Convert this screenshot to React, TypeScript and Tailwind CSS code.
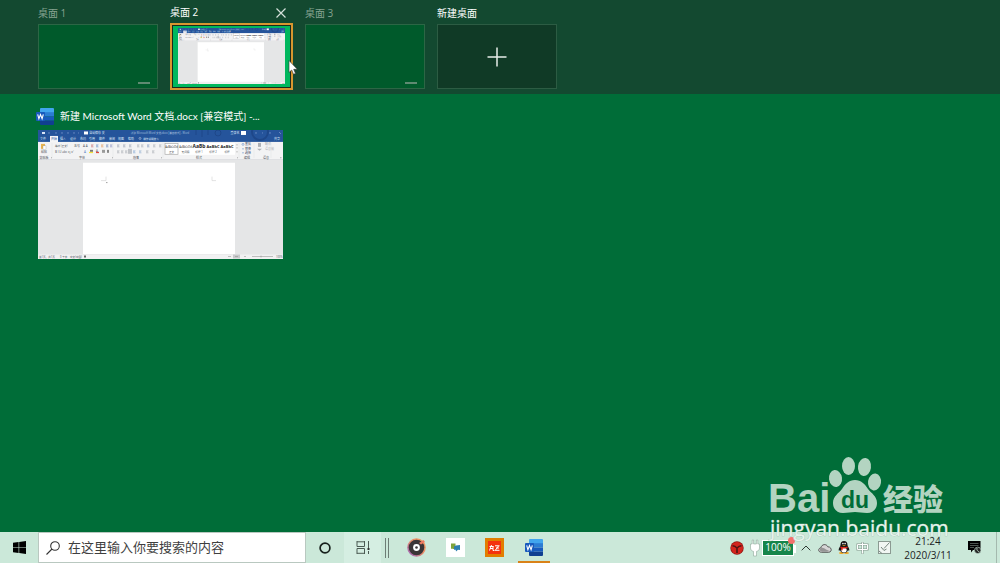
import React, { useState } from "react";
import { clsx } from "clsx";

const tabs = [
  { x: 5, title: "文件" },
  { x: 25, title: "插入" },
  { x: 35, title: "设计" },
  { x: 45, title: "布局" },
  { x: 54, title: "引用" },
  { x: 64, title: "邮件" },
  { x: 74, title: "审阅" },
  { x: 83, title: "视图" },
  { x: 93, title: "帮助" },
];

const groups = [
  { x: 6, title: "剪贴板" },
  { x: 44, title: "字体" },
  { x: 98, title: "段落" },
  { x: 161, title: "样式" },
  { x: 209, title: "编辑" },
  { x: 228, title: "语音" },
];

const tools = [
  { x: 53, y: 14, color: "#c55a5a" },
  { x: 58, y: 14, color: "#4a7cc0" },
  { x: 63, y: 14, color: "#e08a3c" },
  { x: 68, y: 14, color: "#4a6fae" },
  { x: 72, y: 14, color: "#7b83b8" },
  { x: 79, y: 14, color: "#8a93a5" },
  { x: 85, y: 14, color: "#8a93a5" },
  { x: 91, y: 14, color: "#8a93a5" },
  { x: 99, y: 14, color: "#9aa0ab" },
  { x: 103, y: 14, color: "#9aa0ab" },
  { x: 109, y: 14, color: "#6d87b5" },
  { x: 115, y: 14, color: "#9aa0ab" },
  { x: 121, y: 14, color: "#9aa0ab" },
  { x: 79, y: 20, color: "#9aa0ab" },
  { x: 83, y: 20, color: "#9aa0ab" },
  { x: 87, y: 20, color: "#9aa0ab" },
  { x: 95, y: 20, color: "#6f9bd0" },
  { x: 101, y: 20, color: "#7fa3cc" },
  { x: 108, y: 20, color: "#9aa0ab" },
  { x: 114, y: 20, color: "#9aa0ab" },
];

const styles = [
  { x: 133.5, text: "AaBbCcDd", size: 2.6, weight: 400, name: "正文" },
  { x: 147.5, text: "AaBbCcDd", size: 2.6, weight: 400, name: "无间隔" },
  { x: 161, text: "AaBb", size: 5, weight: 700, name: "标题 1" },
  { x: 175, text: "AaBbC", size: 4, weight: 700, name: "标题 2" },
  { x: 189, text: "AaBbC", size: 4, weight: 700, name: "标题" },
];

// Live preview of the Word window, used by the desktop strip and by the window card
const WordPreview = () => (
  <svg
    viewBox="0 0 245 130"
    preserveAspectRatio="none"
    className="block h-full w-full"
    fontSize="3"
    fill="#4b4f57"
  >
    <rect width="245" height="130" fill="#e5e6e7" />
    <rect width="245" height="13" fill="#25549b" />
    <g fill="none" stroke="#1e4789">
      <circle cx="222" cy="2" r="8" strokeWidth="2" />
      <circle cx="180" cy="3" r="3" />
      <path d="M158 0v5M164 0v7M170 0v5" />
    </g>
    <g fill="#dbe6f7" textAnchor="middle">
      <rect x="4" y="2" width="3" height="2" />
      <path
        d="M10 3h2M17 3h2M23 3h2M29 3h2M35 3h2M40 3h1M217 3h2M224 3h1M231 3h2M241 2l2 2"
        stroke="#8eaad6"
        strokeWidth="0.6"
      />
      <rect x="46" y="1.5" width="4" height="3" fill="#fff" />
      <text x="59" y="4">自动保存 关</text>
      <text x="122" y="4" fontSize="2.6" opacity=".7">
        新建 Microsoft Word 文档.docx [兼容模式] - Word
      </text>
      <text x="197" y="4">登录名</text>
      <rect x="203" y="1" width="5" height="4" fill="#fff" />
      {tabs.map((tab) => (
        <text key={tab.x} x={tab.x} y="10">
          {tab.title}
        </text>
      ))}
      <circle cx="102" cy="8.5" r="1" fill="none" stroke="#fff" strokeWidth=".4" />
      <text x="113" y="10" fontSize="2.6">
        操作说明搜索
      </text>
      <text x="239" y="10">共享</text>
    </g>
    <rect x="12" y="6" width="8" height="7" fill="#f5f6f7" />
    <text x="16" y="10" textAnchor="middle" fill="#25549b">
      开始
    </text>
    <rect y="12" width="245" height="18" fill="#f3f3f4" />
    <rect y="29.5" width="245" height=".5" fill="#cfd1d4" />
    <rect x="3" y="14" width="4" height="5" fill="#e9b44f" />
    <rect x="5" y="16" width="3" height="4" fill="#fff" stroke="#888" strokeWidth=".3" />
    <text x="3" y="23">粘贴</text>
    <text x="17" y="17" fontSize="2.6">
      等线 (正文)
    </text>
    <text x="36" y="17">五号</text>
    <text x="45" y="17">A A</text>
    <text x="17" y="23">B I U abc x₂ x²</text>
    <text x="46" y="23" fill="#4a7cc0">
      A
    </text>
    <rect x="52" y="20" width="3" height="2" fill="#777" />
    <rect x="51" y="22" width="4" height="1.3" fill="#f3e13b" />
    <text x="58" y="22">A</text>
    <rect x="58" y="22" width="3" height="1.3" fill="#e2483d" />
    <rect x="64" y="20" width="3" height="3" fill="#9a9a9a" />
    <rect x="69" y="20" width="2" height="3" fill="#888" />
    <rect x="90" y="19" width="4" height="5" fill="#bfc2c7" />
    {tools.map((tool) => (
      <path
        key={`${tool.x}-${tool.y}`}
        d={`M${tool.x} ${tool.y + 1}h2.5m-2.5 1h2m-2 1h2.5`}
        stroke={tool.color}
        strokeWidth=".5"
      />
    ))}
    <rect x="127" y="13" width="70" height="12" fill="#fff" />
    <rect x="127" y="13.5" width="13" height="11" fill="#fff" stroke="#aaa" strokeWidth=".7" />
    {styles.map((style) => (
      <g key={style.x} textAnchor="middle">
        <text x={style.x} y="18" fontSize={style.size} fontWeight={style.weight} fill="#222">
          {style.text}
        </text>
        <text x={style.x} y="23" fontSize="2.6">
          {style.name}
        </text>
      </g>
    ))}
    <path d="M198 15h2M198 18h2M198 22h2" stroke="#999" strokeWidth=".5" />
    <g fill="#35445f">
      <circle cx="205" cy="14.5" r="1" fill="none" stroke="#4a7cc0" strokeWidth=".5" />
      <text x="207" y="15.5">查找</text>
      <text x="207" y="20">替换</text>
      <text x="207" y="24.5">选择</text>
      <path d="M204 19h2M204 23h2" stroke="#4a7cc0" strokeWidth=".5" />
    </g>
    <g fill="#aeb1b6">
      <rect x="220" y="13" width="3" height="4" />
      <path d="M219 19h5l-2.5 2z" />
      <text x="227" y="15.5">翻译</text>
      <text x="227" y="20">语音输</text>
    </g>
    {groups.map((group) => (
      <text key={group.x} x={group.x} y="29" textAnchor="middle">
        {group.title}
      </text>
    ))}
    <path
      d="M14 13v15M75 13v15M125 13v15M201 13v15M216 13v15M233 13v15"
      stroke="#dcdde0"
      strokeWidth=".4"
    />
    <path d="M13 28h1M74 28h1M123 28h1M199 28h1M242 28h1.5" stroke="#777" strokeWidth=".6" />
    <rect x="45" y="33" width="152" height="92" fill="#fff" />
    <path d="M63 51h5v-4M174 47v4h4" fill="none" stroke="#c9c9c9" strokeWidth=".5" />
    <path d="M68 53h1.5" stroke="#777" strokeWidth=".7" />
    <rect y="125.5" width="245" height="4.5" fill="#f1f1f2" />
    <g fontSize="2.6">
      <text x="1" y="129">
        第1页，共1页
      </text>
      <text x="22" y="129">0 个字</text>
      <text x="32" y="129">中文(中国)</text>
      <text x="238" y="129">100%</text>
    </g>
    <rect x="46" y="126.5" width="2" height="2" fill="#666" />
    <rect x="195" y="125.5" width="7" height="4" fill="#c8c9cb" />
    <path
      d="M190 127.5h3M197 127.5h3M206 127.5h2M214 127.5h21M223 126.5v2"
      stroke="#8a8a8a"
      strokeWidth=".5"
    />
  </svg>
);

const WordIcon = () => (
  <svg viewBox="0 0 18 17" className="h-[17px] w-[18px] shrink-0">
    <path d="M5 0h12a1 1 0 0 1 1 1v4H4V1a1 1 0 0 1 1-1z" fill="#41a5ee" />
    <path d="M4 4.200h14v4.300H4z" fill="#2b7cd3" />
    <path d="M4 8.500h14v4.200H4z" fill="#185abd" />
    <path d="M4 12.700h14V16a1 1 0 0 1-1 1H5a1 1 0 0 1-1-1z" fill="#103f91" />
    <rect y="4" width="9" height="9" rx="1" fill="#185abd" />
    <path
      d="M1.700 6.300l1.200 4.500 1.600-4.300 1.600 4.300 1.200-4.500"
      fill="none"
      stroke="#fff"
      strokeWidth="1.1"
    />
  </svg>
);

const desktops = [
  { id: 1, title: "桌面 1" },
  { id: 2, title: "桌面 2" },
  { id: 3, title: "桌面 3" },
];

const DesktopStrip = () => {
  const [active, setActive] = useState(2);
  return (
    <header className="flex h-[94px] gap-3 bg-[#134930] px-[38px] text-[10px]">
      {desktops.map((desktop) => {
        const selected = active === desktop.id;
        return (
          <div
            key={desktop.id}
            className={clsx("relative", selected ? "w-[123px]" : "w-[120px]")}
          >
            <div
              className={clsx(
                "flex items-center justify-between pt-0.5",
                selected ? "h-[23px] text-white" : "h-6 text-[#86a391]"
              )}
            >
              <span>{desktop.title}</span>
              {selected && (
                <button aria-label="关闭" className="mr-[7px] text-[#d5e0da]">
                  <svg viewBox="0 0 10 10" className="h-2.5 w-2.5">
                    <path d="M.5.5l9 9M9.500.5l-9 9" stroke="currentColor" strokeWidth="1.2" />
                  </svg>
                </button>
              )}
            </div>
            <button
              aria-label={desktop.title}
              onClick={() => setActive(desktop.id)}
              className={clsx(
                "block w-full",
                selected
                  ? "h-[67px] border-2 border-[#d8962f] bg-[#1c2a1c] p-px"
                  : "h-[65px] border border-[#2c6645] bg-[#005a2b]"
              )}
            >
              {selected ? (
                <span className="block h-full bg-[#00b75e] px-[5px] pt-0.5 pb-[3px]">
                  <WordPreview />
                </span>
              ) : (
                <span className="flex h-full items-end justify-end pr-[7px] pb-1">
                  <span className="h-0.5 w-3 bg-[#5f8a72]" />
                </span>
              )}
            </button>
            {selected && (
              <svg
                viewBox="0 0 10 15"
                className="absolute top-[60px] -right-[5px] h-[15px] w-2.5"
              >
                <path
                  d="M1 .5v12l2.700-2.500 1.800 4.300 2-.9-1.800-4.100h3.600z"
                  fill="#fff"
                  stroke="#333"
                  strokeWidth=".6"
                />
              </svg>
            )}
          </div>
        );
      })}
      <div className="w-[120px] text-white">
        <div className="flex h-6 items-center pt-0.5">新建桌面</div>
        <button
          aria-label="新建桌面"
          className="flex h-[65px] w-full items-center justify-center border border-[#2c5c43] bg-[#103a26]"
        >
          <svg viewBox="0 0 20 20" className="h-5 w-5">
            <path d="M10 .5v19M.5 10h19" stroke="#e6ede9" strokeWidth="1.5" />
          </svg>
        </button>
      </div>
    </header>
  );
};

const WindowCard = () => (
  <article className="w-[247px]">
    <div className="flex h-6 items-center gap-1.5 text-[10px] text-white">
      <div className="-ml-0.5 flex">
        <WordIcon />
      </div>
      <h2 className="whitespace-nowrap font-['Lato','Noto_Sans_CJK_SC',sans-serif]">
        新建 Microsoft Word 文档.docx [兼容模式] -...
      </h2>
    </div>
    <div className="mt-0.5 h-[129px] w-[245px]">
      <WordPreview />
    </div>
  </article>
);

const Watermark = () => (
  <svg
    viewBox="0 0 184 90"
    className="pointer-events-none absolute right-[52px] bottom-[18px] h-[90px] w-[184px]"
    fill="#b3d4c1"
  >
    <text x="4" y="57" fontSize="40" fontWeight="700" fontFamily="Liberation Sans, sans-serif">
      Bai
    </text>
    <ellipse cx="71.5" cy="23.5" rx="6.5" ry="8.5" transform="rotate(-8 71.5 23.5)" />
    <ellipse cx="84.5" cy="11" rx="6.5" ry="9" />
    <ellipse cx="100.5" cy="12" rx="6.5" ry="9" transform="rotate(8 100.5 12)" />
    <ellipse cx="110.5" cy="27" rx="6.5" ry="8.5" transform="rotate(8 110.5 27)" />
    <path d="M91 25c6 0 10 4 13 9 3 4 9 7 9 14 0 6-4 10-10 10-5 0-8-1-12-1s-7 1-12 1c-6 0-10-4-10-10 0-7 6-10 9-14 3-5 7-9 13-9z" />
    <text
      x="77"
      y="53"
      fontSize="23"
      fontWeight="700"
      fontFamily="Liberation Sans, sans-serif"
      fill="#006d38"
    >
      du
    </text>
    <text
      x="119"
      y="55"
      fontSize="30"
      fontWeight="900"
      fontFamily="Noto Sans CJK SC, sans-serif"
    >
      经验
    </text>
    <text
      x="6"
      y="81"
      fontSize="21"
      fontWeight="500"
      fill="#e6f3ec"
      stroke="#9dbfae"
      strokeWidth=".6"
      paintOrder="stroke"
      fontFamily="Open Sans, sans-serif"
    >
      jingyan.baidu.com
    </text>
  </svg>
);

const Taskbar = () => (
  <footer className="flex h-[31px] items-stretch bg-[#cbe8d9] text-[#1b231f]">
    <button aria-label="开始" className="flex w-[38px] items-center justify-center">
      <svg viewBox="0 0 13 13" className="h-[13px] w-[13px]" fill="#000">
        <path d="M0 1.800l5.600-.8v5.200H0zM6.200.9L13 0v6.200H6.200zM0 6.800h5.600V12L0 11.200zM6.200 6.800H13V13l-6.800-.9z" />
      </svg>
    </button>
    <label className="flex w-[268px] items-center gap-2 border border-[#b9c8c0] bg-white pl-[7px]">
      <svg viewBox="0 0 14 14" className="h-3.5 w-3.5 shrink-0" fill="none" stroke="#333">
        <circle cx="9" cy="5" r="4.300" strokeWidth="1.1" />
        <path d="M6 8L.5 13.500" strokeWidth="1.1" />
      </svg>
      <input
        aria-label="搜索"
        placeholder="在这里输入你要搜索的内容"
        className="min-w-0 flex-1 bg-transparent text-[13px] outline-none placeholder:text-[#3f3f3f]"
      />
    </label>
    <button aria-label="Cortana" className="flex w-[38px] items-center justify-center">
      <svg viewBox="0 0 12 12" className="h-3 w-3">
        <circle cx="6" cy="6" r="4.9" fill="none" stroke="#17211c" strokeWidth="1.7" />
      </svg>
    </button>
    <button
      aria-label="任务视图"
      className="flex w-[37px] items-center justify-center bg-[#d5eee2]"
    >
      <svg viewBox="0 0 14 13" className="h-[13px] w-3.5" fill="none" stroke="#4b5a53">
        <path d="M1 0v5.500h7.500V0M1 13V7.500h7.500V13M1 .8h7.500M1 12.300h7.500M12.500 0v7M12.500 10v3" />
        <rect x="11.500" y="7" width="2" height="2" fill="#333" stroke="none" />
      </svg>
    </button>
    <div className="flex w-4 items-center pl-1">
      <span className="h-5 w-1 border-x border-[#6d7d75]" />
    </div>
    <button aria-label="音乐" className="flex w-[39px] items-center justify-center">
      <svg viewBox="0 0 19 19" className="h-[19px] w-[19px]">
        <defs>
          <linearGradient id="disc" x1="0" y1="1" x2="1" y2="0">
            <stop offset="0" stopColor="#8b5bd0" />
            <stop offset=".5" stopColor="#e88a6a" />
            <stop offset="1" stopColor="#f0a060" />
          </linearGradient>
        </defs>
        <circle cx="9.5" cy="9.5" r="9.3" fill="url(#disc)" />
        <circle cx="9.5" cy="9.5" r="7.8" fill="#3a3436" />
        <circle cx="9.5" cy="9.5" r="3.4" fill="#fff" />
        <circle cx="9.5" cy="9.5" r="1.3" fill="#3a3436" />
        <path d="M12 5l4.500-3 1.500 2-4 2.500z" fill="#ef7b62" />
      </svg>
    </button>
    <button aria-label="消息" className="flex w-[39px] items-center justify-center">
      <svg viewBox="0 0 19 19" className="h-[19px] w-[19px]">
        <rect width="19" height="19" fill="#fff" />
        <path d="M5 5.500h4.500v5.500H7L6 10.500 5 11z" fill="#7fa33b" />
        <path d="M8 8.500l2-1 4-.5v5l-2-.3-2 1.800-.3-1.800H8z" fill="#2c7fb0" />
      </svg>
    </button>
    <button aria-label="热区" className="flex w-[39px] items-center justify-center">
      <span className="flex h-[19px] w-[19px] items-center justify-center border-[3px] border-[#e27d00] bg-[#f4320f]">
        <svg viewBox="0 0 11 6" className="h-1.5 w-[11px]" fill="none" stroke="#fff">
          <path d="M.5 1.500h4M2.500 0L.5 5.500M4 1v4.500h1.500M1 3.500h3M6 .8h4.500M6 5.300h4.500M9.500 1L6.500 5M7 3h3" />
        </svg>
      </span>
    </button>
    <button
      aria-label="Word"
      className="relative flex w-[39px] items-center justify-center"
    >
      <WordIcon />
      <span className="absolute bottom-0 h-0.5 w-8 bg-[#d98218]" />
    </button>

    <div className="ml-auto flex items-center text-[10px]">
      <svg viewBox="0 0 14 14" className="mr-1.5 h-3.5 w-3.5">
        <circle cx="7" cy="7" r="6.7" fill="#8f1713" />
        <circle cx="7" cy="7" r="6" fill="#d3241d" />
        <path
          d="M2.500 4.800C4.500 5 6 6 7 7c1-1 2.500-2 4.500-2.200M7 7v5"
          fill="none"
          stroke="#4f1413"
          strokeWidth="1.6"
        />
      </svg>
      <svg
        viewBox="0 0 10 18"
        className="mr-0.5 h-[18px] w-2.5"
        fill="#fff"
        stroke="#7f988b"
        strokeWidth=".5"
      >
        <path d="M2.200 1h1.400v4h2.800V1h1.400v4h1.700v4c0 2-1.500 3-3 3.400V17H3.500v-4.600C2 12 .5 11 .5 9V5h1.700z" />
      </svg>
      <div className="relative flex h-4 w-8 items-center justify-center border border-white bg-[#16854a] text-white">
        100%
        <span className="absolute -top-1 -right-0.5 h-[7px] w-[7px] rounded-full bg-[#f3716b]" />
        <span className="absolute top-1 -right-[3px] h-2 w-0.5 bg-white" />
      </div>
      <button aria-label="显示隐藏的图标" className="ml-0.5 flex w-[19px] justify-center">
        <svg viewBox="0 0 10 6" className="h-1.5 w-2.5">
          <path d="M.7 5.300L5 1l4.300 4.300" fill="none" stroke="#2f3a35" />
        </svg>
      </button>
      <button aria-label="OneDrive" className="flex w-[19px] justify-center">
        <svg viewBox="0 0 14 10" className="h-2.5 w-3.5">
          <path
            d="M3.500 9.300C-.3 9.300 0 5 3 4.800 3.500 1 8.500.5 9.800 3.800c4-.2 4.800 5.500.7 5.500z"
            fill="#d6d6d6"
            stroke="#4b4b4b"
            strokeWidth=".9"
          />
          <path
            d="M3 5c2-.8 3 .2 5 1.500L11.500 8c-.5.8-7 .8-8.500.5C1.500 8 1.500 5.500 3 5z"
            fill="#959595"
          />
        </svg>
      </button>
      <button aria-label="QQ" className="flex w-[19px] justify-center">
        <svg viewBox="0 0 12 13" className="h-[13px] w-3">
          <ellipse cx="3.5" cy="12" rx="2.5" ry="1" fill="#f0a31c" />
          <ellipse cx="8.5" cy="12" rx="2.5" ry="1" fill="#f0a31c" />
          <path
            d="M6 0c2.400 0 3.500 1.600 3.500 4 0 1.500 2.300 3.500 1.800 5.500-.5.500-1-.3-1.300-.5-.5 2-2 3-4 3s-3.500-1-4-3c-.3.200-.8 1-1.300.5C.2 7.500 2.500 5.500 2.500 4c0-2.400 1.100-4 3.500-4z"
            fill="#161616"
          />
          <ellipse cx="6" cy="9" rx="2.7" ry="2.5" fill="#fff" />
          <circle cx="4.9" cy="2.6" r=".8" fill="#fff" />
          <circle cx="7.1" cy="2.6" r=".8" fill="#fff" />
          <path d="M4 4.300h4L6 5.300z" fill="#f0a31c" />
          <path
            d="M2.400 5.500c2 1 5 1 7.200 0v1.400c-2 .8-4 .8-5 .6v1.800H3.200V7.200l-.8-.4z"
            fill="#e2231a"
          />
        </svg>
      </button>
      <button aria-label="输入法" className="flex w-[19px] justify-center">
        <svg viewBox="0 0 13 14" className="h-3.5 w-[13px]" fill="none">
          <path d="M1.500 3.500h10v5h-10zM6.500 1v12" stroke="#86988e" strokeWidth="2" />
          <path d="M1.500 3.500h10v5h-10zM6.500 1.400v11.200" stroke="#fff" strokeWidth="1" />
        </svg>
      </button>
      <button aria-label="手写笔" className="mr-2 flex w-6 justify-center">
        <svg viewBox="0 0 13 13" className="h-[13px] w-[13px]" fill="none">
          <rect x=".5" y=".5" width="12" height="12" fill="#f1f6f3" stroke="#8b9a92" />
          <path d="M11.500 1.500L6 7.500M3 6l3 3.500L8.500 8" stroke="#75857d" />
          <path d="M1 10l3 2.500" stroke="#75857d" />
        </svg>
      </button>
      <button className="flex w-12 flex-col items-center whitespace-nowrap leading-[14px]">
        <span>21:24</span>
        <span>2020/3/11</span>
      </button>
      <button aria-label="通知" className="flex w-11 justify-center">
        <svg viewBox="0 0 13 13" className="h-[13px] w-[13px]">
          <path d="M0 0h12.500v9H5l-2 2.500V9H0z" fill="#000" />
          <path d="M2 2.500h8.500M2 4.500h8.500M2 6.500h4" stroke="#7f8f87" strokeWidth=".6" />
          <circle cx="9.7" cy="9.3" r="3.2" fill="#222" stroke="#cbe8d9" strokeWidth=".6" />
          <path d="M9 7c-.5 2 .5 3.500 2.300 3.700" fill="none" stroke="#cbe8d9" strokeWidth=".8" />
        </svg>
      </button>
      <span className="mr-[3px] h-[31px] w-px bg-[#a4b9ae]" />
    </div>
  </footer>
);

const App = () => {
  return (
    <div className="relative flex min-h-screen flex-col bg-[#006d38] font-['Open_Sans','Noto_Sans_CJK_SC',sans-serif]">
      <DesktopStrip />
      <main className="flex-1 px-[38px] pt-2.5">
        <WindowCard />
      </main>
      <Taskbar />
      <Watermark />
    </div>
  );
};

export default App;
